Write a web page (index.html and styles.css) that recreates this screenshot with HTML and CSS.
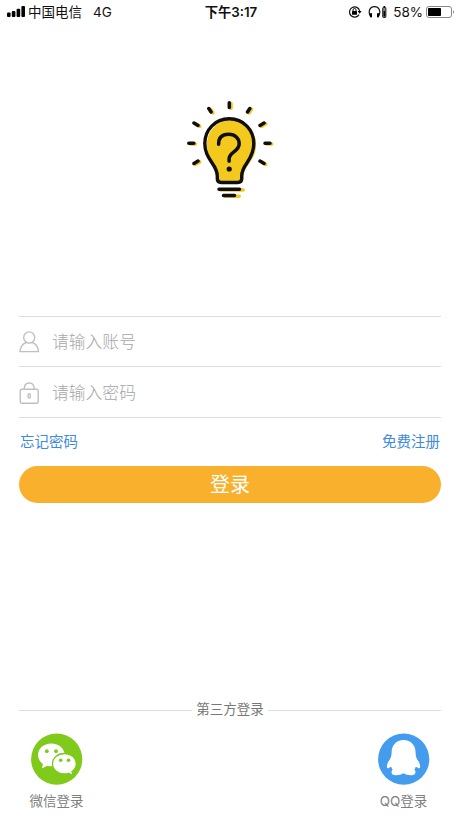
FILE: index.html
```html
<!DOCTYPE html>
<html lang="zh-CN">
<head>
<meta charset="utf-8">
<title>登录</title>
<link rel="stylesheet" href="styles.css">
</head>
<body>
<div class="screen">
  <header class="status">
    <div class="status-left">
      <svg class="signal" width="18" height="12" viewBox="0 0 18 12"><rect x="0" y="6.500" width="3.6" height="4.5" rx="1"/><rect x="4.8" y="5" width="3.6" height="6" rx="1"/><rect x="9.6" y="2.700" width="3.6" height="8.3" rx="1"/><rect x="14.4" y="0" width="3.6" height="11" rx="1"/></svg>
      <span class="carrier">中国电信</span><span>4G</span>
    </div>
    <div class="clock">下午3:17</div>
    <div class="status-right">
      <svg class="lock-rotation" width="14" height="14" viewBox="0 0 14 14"><path d="M11 9.600A5.100 5.100 0 1 1 11.600 6" fill="none" stroke="#111" stroke-width="1.200"/><path d="M9.600 6h4L11.700 8.700z"/><rect x="4" y="6" width="5" height="3.800" rx=".5"/><path d="M5 6V5a1.500 1.500 0 0 1 3 0v1" fill="none" stroke="#111"/></svg>
      <svg class="headphones" width="19" height="14" viewBox="0 0 19 14"><path d="M2.200 11C-.2 6 2 1.700 6.500 1.700S13.200 6 10.800 11" fill="none" stroke="#111" stroke-width="1.200"/><rect x="2" y="8" width="2" height="4.500" rx=".8"/><rect x="9" y="8" width="2" height="4.500" rx=".8"/><rect x="14.700" y="2.500" width="3.200" height="10" rx=".8" fill="#888" stroke="#111" stroke-width=".9"/><path d="M15.500 1h1.700v1.500h-1.700zM15.600 6h1.500v5.500h-1.500z"/></svg>
      <span class="percent">58%</span>
      <svg class="battery" width="29" height="13" viewBox="0 0 29 13"><rect x=".5" y=".5" width="25" height="11" rx="2.500" fill="#fff" stroke="#888"/><rect x="2" y="2" width="13" height="8" rx=".8"/><path d="M27 4q2 2 0 4z" fill="#888"/></svg>
    </div>
  </header>

  <svg class="logo" width="100" height="114" viewBox="0 0 100 114">
    <g fill="none" stroke="#f3c91d" stroke-width="3.600" stroke-linecap="round" transform="translate(1.700 .8)">
      <path d="M49.300 10.800v4.700M28.800 16.500l2.300 3.500M69.800 16.500l-2.300 3.500M14 31l4 2.400M84 31l-4 2.400M8.800 51.200h5M85 51.200h5M14 71.500l4-2.400M84 71.500l-4-2.400M39 97.200h22.500M43.500 103.500h14"/>
    </g>
    <path d="M51.500 28C37 28 27 39 27 53c0 10 4 15.500 7.500 20.500C38 78.500 39 81 39 87c0 3 1.500 4.500 4 4.500h15c3.500 0 5.500-1.500 5.500-4.500 0-7 1.500-10 5-14.500 4-5.500 7.500-10.500 7.500-19.500C76 38 65.500 28 51.500 28z" fill="#f3c91d"/>
    <path d="M49.300 26.800C35 26.800 24.800 38 24.800 51.500c0 8.500 3.400 13.700 7 19 3.500 5 5.500 8.500 5.500 13.500v2.500q0 4 4 4h16.400q4 0 4-4V84c0-5 2-8.500 5.500-13.500 3.600-5.300 6.600-10.500 6.600-19 0-13.500-10.200-24.700-24.500-24.700z" fill="none" stroke="#100e0b" stroke-width="3.400"/>
    <g fill="none" stroke="#100e0b" stroke-width="3.500" stroke-linecap="round">
      <path d="M38.600 52.200C38.600 45 43 42.300 48.600 42.300c6.400 0 10.600 4 10.600 9.400 0 8-10.100 8.300-10.100 15.300v2.200"/>
      <path d="M49.300 10.800v4.700M28.800 16.500l2.300 3.500M69.800 16.500l-2.300 3.500M14 31l4 2.400M84 31l-4 2.400M8.800 51.200h5M85 51.200h5M14 71.500l4-2.400M84 71.500l-4-2.400M39 97.200h20.500M43.500 103.500h11"/>
    </g>
    <circle cx="49.200" cy="77" r="2.600" fill="#100e0b"/>
  </svg>

  <main class="form">
    <label class="field field-account">
      <svg width="21" height="22" viewBox="0 0 21 22"><ellipse cx="10.200" cy="6.500" rx="5.500" ry="5.600"/><path d="M7.200 11.500C3.500 13 1.200 16 1 20.600h18.500c-.2-4.600-2.500-7.600-6.200-9.100"/></svg>
      <span>请输入账号</span>
    </label>
    <label class="field field-password">
      <svg width="21" height="22" viewBox="0 0 21 22"><rect x="1.200" y="7.200" width="18" height="14" rx="1.500"/><path d="M5.200 7C5.200 3 7.200 1 10.200 1s5 2 5 6"/><ellipse cx="10.200" cy="13.800" rx="1.200" ry="2.200"/></svg>
      <span>请输入密码</span>
    </label>
    <div class="links"><a>忘记密码</a><a>免费注册</a></div>
    <button class="login">登录</button>
  </main>

  <footer class="third">
    <div class="divider"><span>第三方登录</span></div>
    <div class="providers">
      <div class="provider">
        <svg width="52" height="52" viewBox="0 0 52 52"><circle cx="25.700" cy="26.200" r="25.600" fill="#7fca1b"/><path d="M20.500 10.500C12.500 10.500 7 15.500 7 22c0 4 2 7 5 9l-1.100 4.500 5.300-2.800c1.600.4 3 .6 4.800.6h1.500C21 26 25.500 20.300 33.500 20.100 32 14 27 10.500 20.500 10.500z" fill="#fff"/><path d="M33.500 20.500C26.500 20.500 21.500 25 21.500 30.700s5 10.300 12 10.300c1.600 0 3-.2 4.300-.7l4.200 2.500-1-4.300c2.600-1.800 4.300-4.500 4.300-7.800C45.300 25 40.500 20.500 33.500 20.500z" fill="#fff" stroke="#7fca1b" stroke-width="1.300"/><g fill="#7fca1b"><circle cx="15.800" cy="18.200" r="1.900"/><circle cx="25" cy="18.200" r="1.900"/><circle cx="29.700" cy="27.200" r="1.800"/><circle cx="37.500" cy="27.200" r="1.800"/></g></svg>
        <span>微信登录</span>
      </div>
      <div class="provider">
        <svg width="52" height="52" viewBox="0 0 52 52"><circle cx="25.700" cy="26.200" r="25.600" fill="#439cee"/><path d="M25.500 7C18 7 13.600 12.500 13.600 19.500c0 3-.6 4.500-1.800 7C9.500 29.500 8.500 32 9 34.500c.6 1.300 2 .6 3.100-.6l1.500.4c0 1 .3 1.700 1 2.300-1.300 1.300-1.500 3.400-.3 4.600 2.200 1.600 8.200 1.100 11.200-1 3 2.100 9 2.600 11.200 1 1.200-1.200 1-3.300-.3-4.600.7-.6 1-1.300 1-2.300l1.500-.4c1.100 1.200 2.500 1.900 3.100.6.500-2.500-.5-5-2.800-8-1.200-2.500-1.600-4-1.600-7C37.600 12.500 33.100 7 25.500 7z" fill="#fff"/></svg>
        <span>QQ登录</span>
      </div>
    </div>
  </footer>
</div>
</body>
</html>
```
FILE: styles.css
```css
* { box-sizing: border-box; }
body { margin: 0; background: #fff; font-family: Inter, "Noto Sans CJK SC", sans-serif; }
.screen { width: 460px; height: 818px; display: flex; flex-direction: column; overflow: hidden; }
svg { display: block; flex: none; }
.status { height: 24px; display: grid; grid-template-columns: 1fr auto 1fr; align-items: center; padding: 0 5px 1px 7px; font-size: 13.5px; line-height: 23px; color: #111; }
.status-left, .status-right { display: flex; align-items: center; }
.status-left span, .clock, .percent { padding-top: 1px; }
.status-right { justify-content: flex-end; }
.carrier { margin: 0 11px 0 3px; }
.clock { font-size: 13.3px; font-weight: 600; }
.headphones { margin-left: 6px; }
.percent { margin: 0 3px 0 6px; }
.logo { margin: 68px 0 0 180px; }
.form { margin: 110px 19px 0; }
.field { display: flex; align-items: center; border-top: 1px solid #ddd; font-size: 16.8px; font-weight: 300; color: #a6a6a6; }
.field span { padding-bottom: 2px; }
.field-password span { padding-bottom: 0; }
.field svg { fill: none; stroke: #c0c0c0; stroke-width: 1.4; margin: 0 12px 0 0; }
.field-account { height: 50px; }
.field-password { height: 52px; border-bottom: 1px solid #ddd; }
.field-password svg { margin-top: 1px; }
.links { height: 48px; display: flex; justify-content: space-between; align-items: center; padding: 0 1px 3px; font-size: 14.5px; color: #3d8ae0; }
.login { display: block; width: 100%; height: 37px; padding: 0 0 1px; border: 0; border-radius: 19px; background: #f9b12d; color: #fff; font: 400 20px/36px "Noto Sans CJK SC", sans-serif; }
.third { margin: 195px 19px 0; }
.divider { display: flex; align-items: center; gap: 4px; height: 24px; font-size: 13.5px; line-height: 22px; color: #777; }
.divider span { padding-bottom: 2px; }
.divider::before, .divider::after { content: ""; flex: 1; height: 1px; background: #ddd; }
.providers { display: flex; justify-content: space-between; padding: 11px 10px 0; }
.provider { width: 55px; display: flex; flex-direction: column; align-items: center; font-size: 13.5px; color: #808080; white-space: nowrap; }
.provider span { margin-top: 6px; line-height: 20px; }
```
